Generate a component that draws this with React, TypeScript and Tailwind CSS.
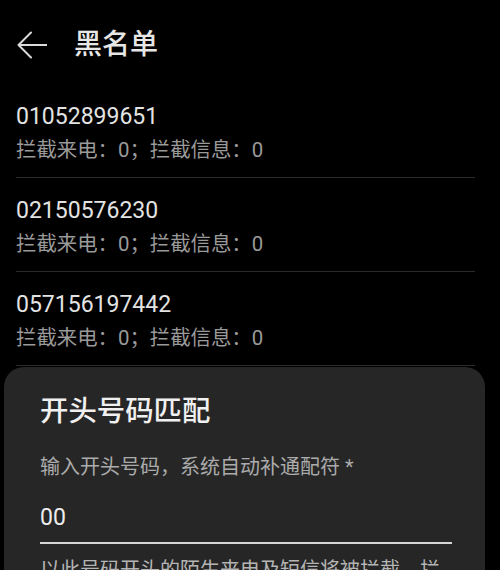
import React from "react";

const font = { fontFamily: 'Roboto, "Noto Sans CJK SC", sans-serif' };

const rows = [
  "01052899651",
  "02150576230",
  "057156197442",
];

export default function App() {
  return (
    <div
      className="h-[570px] w-[500px] overflow-hidden bg-black"
      style={font}
    >
      <div className="flex h-[84px] items-center pl-[17px] pt-[6px]">
        <svg width="30" height="28" viewBox="0 0 30 28" fill="none">
          <path
            d="M14 1.5 L1.5 14 L14 26.5 M1.5 14 H29.5"
            stroke="#d9d9d9"
            strokeWidth="2"
            strokeLinecap="round"
            strokeLinejoin="round"
          />
        </svg>
        <div className="ml-[27px] text-[28px] leading-[34px] font-medium text-[#e6e6e6]">
          黑名单
        </div>
      </div>

      <div className="ml-4 w-[459px]">
        {rows.map((n) => (
          <div
            key={n}
            className="flex flex-col gap-[4px] border-b border-[#2b2b2b] pt-[18px] pb-[13px]"
          >
            <div className="text-[23px] leading-[30px] text-[#e3e3e3]">{n}</div>
            <div className="text-[20.4px] leading-[28px] text-[#9a9a9a]">
              拦截来电：0；拦截信息：0
            </div>
          </div>
        ))}
      </div>

      <div className="ml-[4px] mt-[1px] h-[300px] w-[481px] rounded-t-[20px] bg-[#262626] pl-[36px] pr-[33px] pt-[27px]">
        <div className="text-[28.4px] leading-[36px] font-medium text-[#f0f0f0]">
          开头号码匹配
        </div>
        <div className="mt-[23px] text-[20px] leading-[28px] text-[#ababab]">
          输入开头号码，系统自动补通配符 *
        </div>
        <div className="mt-[22px] border-b-2 border-[#d6d6d6] pb-[9px] text-[23px] leading-[30px] text-[#ededed]">
          00
        </div>
        <div className="mt-[12px] text-[20px] leading-[28px] text-[#b5b5b5]">
          以此号码开头的陌生来电及短信将被拦截，拦截记录将显示在骚扰拦截中
        </div>
      </div>
    </div>
  );
}
